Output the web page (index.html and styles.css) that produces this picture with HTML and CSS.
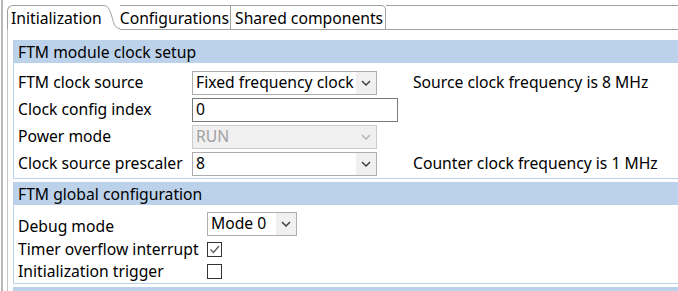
FILE: index.html
```html
<!DOCTYPE html>
<html lang="en">
  <head>
    <meta charset="UTF-8" />
    <meta name="viewport" content="width=device-width, initial-scale=1.0" />
    <title>FTM component</title>
    <link rel="stylesheet" href="styles.css">
  </head>
  <body>
    <div class="window">
      <div class="tabs">
        <div class="tab active">Initialization</div>
        <svg class="tab-curve" width="17" height="25" viewBox="0 0 17 25">
          <path d="M0 0.5 C5 0.5 6 3 9 12 C11 19 12 23.5 17 23.5 L17 25 L0 25 Z" fill="#fff" />
          <path d="M0 0.5 C5 0.5 6 3 9 12 C11 19 12 23.5 17 23.5" fill="none" stroke="#a0a0a0" stroke-width="1" />
        </svg>
        <div class="tab conf">Configurations</div>
        <div class="tab shared">Shared components</div>
        <div class="tab-fill"></div>
      </div>

      <div class="panel">
        <section class="group">
          <div class="group-title">FTM module clock setup</div>
          <div class="group-body clock">
            <span class="label">FTM clock source</span>
            <div class="combo wide">
              <span class="combo-text">Fixed frequency clock</span>
              <span class="combo-arrow"><svg width="10" height="6" viewBox="0 0 10 6"><path d="M1 1 L5 5 L9 1" /></svg></span>
            </div>
            <span class="note">Source clock frequency is 8 MHz</span>

            <span class="label">Clock config index</span>
            <div class="field">0</div>
            <span></span>

            <span class="label">Power mode</span>
            <div class="combo wide disabled">
              <span class="combo-text">RUN</span>
              <span class="combo-arrow"><svg width="10" height="6" viewBox="0 0 10 6"><path d="M1 1 L5 5 L9 1" /></svg></span>
            </div>
            <span></span>

            <span class="label">Clock source prescaler</span>
            <div class="combo wide">
              <span class="combo-text">8</span>
              <span class="combo-arrow"><svg width="10" height="6" viewBox="0 0 10 6"><path d="M1 1 L5 5 L9 1" /></svg></span>
            </div>
            <span class="note">Counter clock frequency is 1 MHz</span>
          </div>
        </section>

        <section class="group">
          <div class="group-title">FTM global configuration</div>
          <div class="group-body global">
            <span class="label">Debug mode</span>
            <div class="combo small">
              <span class="combo-text">Mode 0</span>
              <span class="combo-arrow"><svg width="10" height="6" viewBox="0 0 10 6"><path d="M1 1 L5 5 L9 1" /></svg></span>
            </div>

            <span class="label">Timer overflow interrupt</span>
            <span class="check"><svg width="13" height="13" viewBox="0 0 13 13"><path d="M2.5 6.5 L5.5 9.5 L11 3" /></svg></span>

            <span class="label">Initialization trigger</span>
            <span class="check"></span>
          </div>
        </section>

        <section class="group">
          <div class="group-title"></div>
        </section>
      </div>
    </div>
  </body>
</html>
```

FILE: styles.css
```css
body {
  margin: 0;
  padding-left: 1px;
  font-family: "Noto Sans", sans-serif;
  font-size: 15.7px;
  color: #000;
  background-color: #fff;
  overflow: hidden;
}
.window {
  border-left: 2px solid #b9b9b9;
  height: 291px;
  box-sizing: border-box;
  overflow: hidden;
}

/* tab strip */
.tabs {
  display: flex;
  margin-top: 5px;
  padding-left: 4px;
  height: 25px;
}
.tab {
  box-sizing: border-box;
  height: 25px;
  line-height: 22px;
  padding-top: 1px;
  border-top: 1px solid #a0a0a0;
  border-bottom: 1px solid #a0a0a0;
  white-space: nowrap;
}
.tab.active {
  border-left: 1px solid #a0a0a0;
  border-bottom-color: #fff;
  border-top-left-radius: 6px;
  padding-left: 3px;
  padding-right: 1px;
}
.tab-curve {
  display: block;
  flex: none;
}
.tab.conf {
  padding-left: 0;
  padding-right: 1px;
  border-right: 1px solid #a0a0a0;
}
.tab.shared {
  padding-left: 4px;
  padding-right: 2px;
  border-right: 1px solid #a0a0a0;
  border-top-right-radius: 5px;
}
.tab-fill {
  flex: 1;
  border-top: 1px solid #a0a0a0;
  border-bottom: 1px solid #a0a0a0;
  box-sizing: border-box;
}

/* content */
.panel {
  box-sizing: border-box;
  margin-left: 4px;
  border-left: 1px solid #c4c4c4;
  padding: 10px 0 0 5px;
  height: 261px;
  overflow: hidden;
}
.group {
  border: 1px solid #bcd2ea;
  border-top: none;
  border-right: none;
  margin-bottom: 3px;
}
.group-title {
  box-sizing: border-box;
  background-color: #bcd2ea;
  height: 23px;
  line-height: 22px;
  padding: 1px 0 0 4px;
}
.group-body {
  display: grid;
  align-items: center;
  padding-left: 4px;
}
.clock {
  grid-template-columns: 174px 221px auto;
  grid-auto-rows: 24px;
  row-gap: 3px;
  padding-top: 8px;
  padding-bottom: 2px;
}
.global {
  grid-template-columns: 189px auto;
  grid-template-rows: 25px 22px 22px;
  padding-top: 8px;
  padding-bottom: 1px;
}
.global .combo {
  align-self: start;
  margin-top: -1px;
}
.label,
.note {
  white-space: nowrap;
  line-height: 22px;
}
.clock .label,
.clock .note {
  padding-bottom: 2px;
}

/* controls */
.combo {
  box-sizing: border-box;
  height: 24px;
  border: 1px solid #adadad;
  background-color: #fff;
  display: flex;
  align-items: stretch;
}
.combo.wide {
  width: 185px;
}
.combo.small {
  width: 90px;
}
.combo-text {
  flex: 1;
  line-height: 21px;
  padding-left: 3px;
  white-space: nowrap;
  overflow: hidden;
}
.combo-arrow {
  width: 20px;
  background-color: #f0f0f0;
  display: flex;
  align-items: center;
  justify-content: center;
}
.combo-arrow path {
  fill: none;
  stroke: #404040;
  stroke-width: 1.5;
}
.combo.disabled {
  background-color: #f0f0f0;
  border-color: #cccccc;
  color: #a0a0a0;
}
.combo.disabled .combo-arrow path {
  stroke: #b5b5b5;
}
.field {
  box-sizing: border-box;
  width: 206px;
  height: 24px;
  line-height: 21px;
  border: 1px solid #7a7a7a;
  padding-left: 3px;
}
.check {
  box-sizing: border-box;
  width: 15px;
  height: 15px;
  border: 1px solid #333333;
  display: flex;
  align-items: center;
  justify-content: center;
}
.check path {
  fill: none;
  stroke: #5a5a5a;
  stroke-width: 1.3;
}
```
